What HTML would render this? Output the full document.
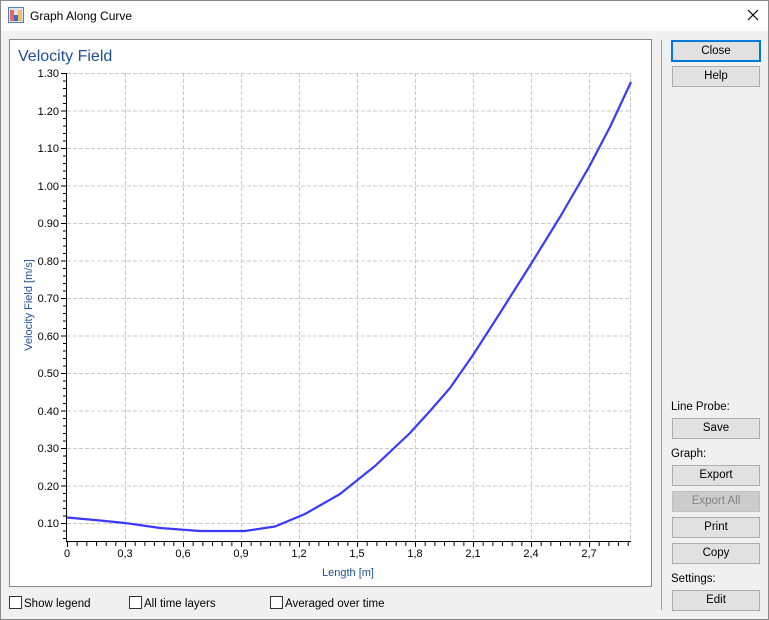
<!DOCTYPE html>
<html><head><meta charset="utf-8"><style>
body{margin:0;width:769px;height:620px;overflow:hidden;background:#f0f0f0;font-family:"Liberation Sans",sans-serif;font-size:11px;color:#000;position:relative}
.frame{position:absolute;left:0;top:0;width:767px;height:618px;border:1px solid #888;pointer-events:none}
.title{position:absolute;left:0;top:0;width:769px;height:31px;background:#fff}
.btn{position:absolute;left:672px;width:86px;height:19px;border:1px solid #adadad;background:#e1e1e1;text-align:center;line-height:19px;font-size:11.5px}
.lbl{position:absolute;left:671px;font-size:11.5px}
.cb{position:absolute;top:596px;font-size:11.5px}
.cb span{display:inline-block;width:11px;height:11px;border:1px solid #333;background:#fff;vertical-align:-2px;margin-right:2px}
</style></head><body>
<div class="title">
<svg style="position:absolute;left:8px;top:7px" width="16" height="16"><rect x="0.5" y="0.5" width="15" height="15" fill="#d8e4f4" stroke="#5a7fb5"/><rect x="2" y="3" width="4" height="11" fill="#e06a6a"/><rect x="10" y="3" width="4" height="11" fill="#f0c060"/><rect x="6" y="8" width="4" height="6" fill="#3a6ac0"/></svg>
<div style="position:absolute;left:30px;top:9px;font-size:12px">Graph Along Curve</div>
<svg style="position:absolute;left:747px;top:9px" width="12" height="12"><path d="M1 1L11 11M11 1L1 11" stroke="#000" stroke-width="1.2"/></svg>
</div>
<div style="position:absolute;left:9px;top:39px;width:641px;height:546px;border:1px solid #888;background:#fff"></div>
<div style="position:absolute;left:661px;top:40px;width:1px;height:570px;background:#a0a0a0"></div>
<svg style="position:absolute;left:0;top:0" width="769" height="620">
<defs>
<pattern id="py" x="0" y="73" width="4" height="7.5" patternUnits="userSpaceOnUse"><rect x="0" y="0" width="4" height="1" fill="#000"/></pattern>
<pattern id="px" x="67" y="0" width="9.667" height="4" patternUnits="userSpaceOnUse"><rect x="0" y="0" width="1" height="4" fill="#000"/></pattern>
</defs>
<text x="18" y="61" font-family="Liberation Sans" font-size="16" fill="#1f4f96">Velocity Field</text>
<g stroke="#c8c8c8" stroke-dasharray="4,2" stroke-width="1">
<path d="M67 73.5H631M67 111H631M67 148.5H631M67 186H631M67 223.5H631M67 261H631M67 298.5H631M67 336H631M67 373.5H631M67 411H631M67 448.5H631M67 486H631M67 523.5H631"/>
<path d="M125.5 73V541M183.5 73V541M241.5 73V541M299.5 73V541M357.5 73V541M415.5 73V541M473.5 73V541M531.5 73V541M589.5 73V541M630.5 73V541"/>
</g>
<rect x="63" y="73" width="4" height="468" fill="url(#py)"/>
<rect x="67" y="542" width="564" height="4" fill="url(#px)"/>
<path d="M66.5 73V541.5H631" stroke="#000" fill="none"/>
<path d="M61 73.5h6M61 111h6M61 148.5h6M61 186h6M61 223.5h6M61 261h6M61 298.5h6M61 336h6M61 373.5h6M61 411h6M61 448.5h6M61 486h6M61 523.5h6M67.5 541v6M125.5 541v6M183.5 541v6M241.5 541v6M299.5 541v6M357.5 541v6M415.5 541v6M473.5 541v6M531.5 541v6M589.5 541v6" stroke="#000"/>
<g font-family="Liberation Sans" font-size="11" text-anchor="end" fill="#000">
<text x="59" y="77">1.30</text><text x="59" y="115">1.20</text><text x="59" y="152">1.10</text><text x="59" y="190">1.00</text><text x="59" y="227">0.90</text><text x="59" y="265">0.80</text><text x="59" y="302">0.70</text><text x="59" y="340">0.60</text><text x="59" y="377">0.50</text><text x="59" y="415">0.40</text><text x="59" y="452">0.30</text><text x="59" y="490">0.20</text><text x="59" y="527">0.10</text>
</g>
<g font-family="Liberation Sans" font-size="11" text-anchor="middle" fill="#000">
<text x="67" y="557">0</text><text x="125" y="557">0,3</text><text x="183" y="557">0,6</text><text x="241" y="557">0,9</text><text x="299" y="557">1,2</text><text x="357" y="557">1,5</text><text x="415" y="557">1,8</text><text x="473" y="557">2,1</text><text x="531" y="557">2,4</text><text x="589" y="557">2,7</text>
</g>
<text x="348" y="576" font-family="Liberation Sans" font-size="11" text-anchor="middle" fill="#1f4f96">Length [m]</text>
<text transform="translate(32,305) rotate(-90)" font-family="Liberation Sans" font-size="11" text-anchor="middle" fill="#1f4f96">Velocity Field [m/s]</text>
<polyline fill="none" stroke="#3a3aff" stroke-width="2.2" stroke-linejoin="round" points="67,517.5 100,520.5 125,523 160,528 200,531 245,531 275,526.5 305,514 340,494 375,466 410,433 430,411 450,388 473,355 500,313 531,264 560,217 589,167 610,127 631,82"/>
</svg>
<div class="btn" style="top:40px;border:2px solid #0078d7;left:671px;height:18px;line-height:18px">Close</div>
<div class="btn" style="top:66px">Help</div>
<div class="lbl" style="top:401px">Line Probe:</div>
<div class="btn" style="top:418px">Save</div>
<div class="lbl" style="top:448px">Graph:</div>
<div class="btn" style="top:465px">Export</div>
<div class="btn" style="top:491px;background:#ccc;border-color:#bfbfbf;color:#838383">Export All</div>
<div class="btn" style="top:517px">Print</div>
<div class="btn" style="top:543px">Copy</div>
<div class="lbl" style="top:573px">Settings:</div>
<div class="btn" style="top:590px">Edit</div>
<div class="cb" style="left:9px"><span></span>Show legend</div>
<div class="cb" style="left:129px"><span></span>All time layers</div>
<div class="cb" style="left:270px"><span></span>Averaged over time</div>
<div class="frame"></div>
</body></html>
